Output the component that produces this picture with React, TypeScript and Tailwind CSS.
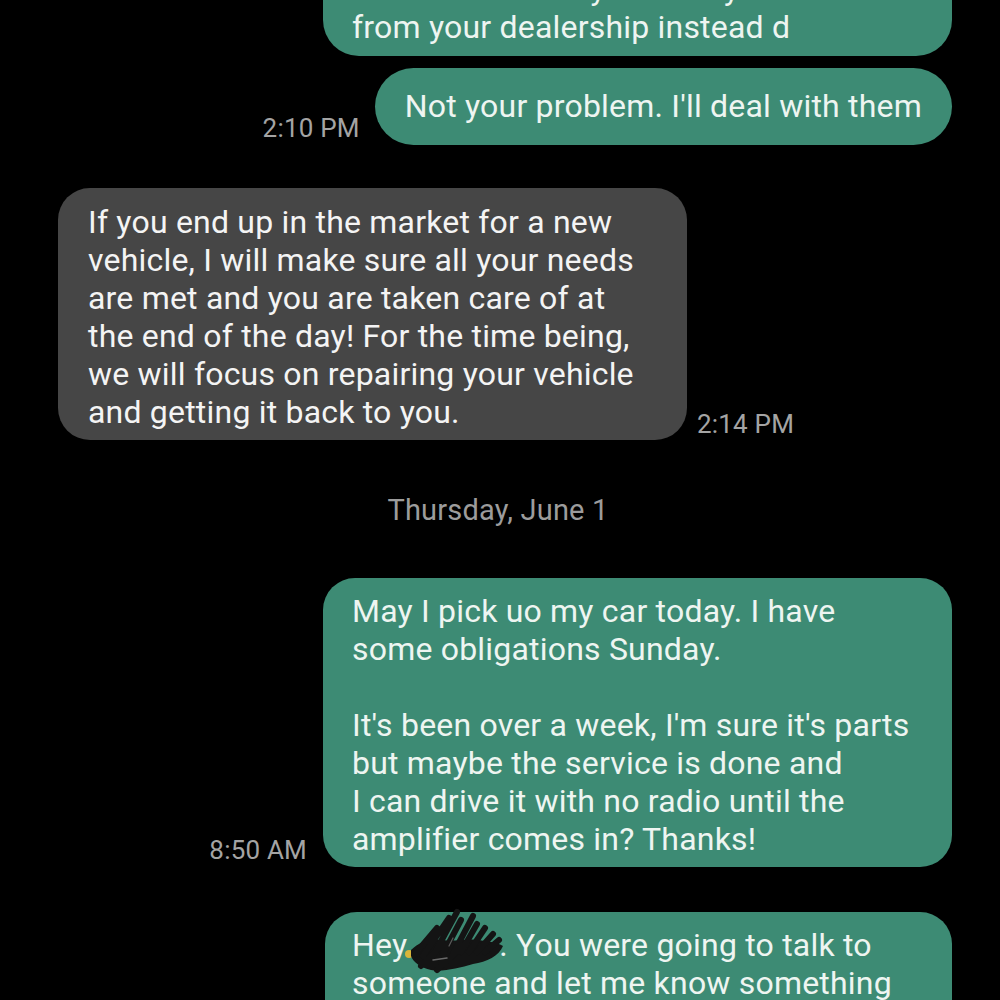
import React from 'react';

const Stamp: React.FC<{ text: string; pb?: string }> = ({ text, pb = 'pb-[2px]' }) => (
  <span className={`shrink-0 whitespace-nowrap text-[26px] leading-[30px] text-[#a4a4a4] ${pb}`}>{text}</span>
);

const Lines: React.FC<{ lines: React.ReactNode[] }> = ({ lines }) => (
  <>
    {lines.map((l, i) => (
      <div key={i} className="h-[38px] whitespace-nowrap">
        {l}
      </div>
    ))}
  </>
);

// redaction scribble over the name
const Scribble: React.FC = () => (
  <span className="relative inline-block h-[38px] w-[92px] align-top">
    <svg
      className="absolute left-[-4px] top-[-20px]"
      width="106"
      height="72"
      viewBox="0 0 106 72"
    >
      <circle cx="6" cy="48" r="4" fill="#d9b53a" />
      <path
        d="M8 44 C16 36 28 32 40 34 C52 36 64 32 76 34 C86 36 94 36 100 40 C96 50 84 56 70 58 C56 62 40 66 28 64 C18 62 10 56 8 50 Z"
        fill="#141414"
      />
      <path
        d="M12 48 L34 22 M20 50 L46 12 M30 50 L54 6 M40 48 L58 14 M50 48 L70 10 M58 46 L74 18 M66 46 L82 22 M74 46 L90 28 M82 46 L96 34 M18 60 L40 38 M34 64 L60 40"
        stroke="#141414"
        strokeWidth="6"
        strokeLinecap="round"
        fill="none"
      />
      <path d="M30 54 L44 52" stroke="#6a6a6a" strokeWidth="1.5" strokeLinecap="round" />
      <path d="M46 40 L50 32" stroke="#5a5a5a" strokeWidth="1.2" strokeLinecap="round" />
    </svg>
  </span>
);

export default function App() {
  return (
    <div className="h-[1000px] w-[1000px] overflow-hidden bg-black font-['Roboto','Noto_Sans',sans-serif] text-[32px] leading-[38px] tracking-[0.2px]">
      <div className="flex flex-col pr-[48px]">
        {/* cut-off first bubble */}
        <div className="mt-[-45px] flex justify-end">
          <div className="w-[629px] rounded-[36px] bg-[#3d8b74] pb-[10px] pl-[29px] pt-[15px] text-[#eef5f1]">
            <Lines lines={["need the car. maybe I'll buy a new car", 'from your dealership instead d']} />
          </div>
        </div>

        <div className="mt-[12px] flex items-end justify-end gap-[15px]">
          <Stamp text="2:10 PM" />
          <div className="rounded-full bg-[#3d8b74] px-[30px] pb-[20px] pt-[19px] text-[#eef5f1]">
            <Lines lines={["Not your problem. I'll deal with them"]} />
          </div>
        </div>

        {/* incoming */}
        <div className="mt-[43px] flex items-end gap-[10px] pl-[58px]">
          <div className="w-[629px] rounded-[32px] bg-[#464646] pb-[9px] pl-[30px] pt-[15px] text-[#f4f4f4]">
            <Lines
              lines={[
                'If you end up in the market for a new',
                'vehicle, I will make sure all your needs',
                'are met and you are taken care of at',
                'the end of the day! For the time being,',
                'we will focus on repairing your vehicle',
                'and getting it back to you.',
              ]}
            />
          </div>
          <Stamp text="2:14 PM" pb="pb-[1px]" />
        </div>

        <div className="mt-[54px] pl-[44px] text-center text-[29px] leading-[32px] text-[#9c9c9c]">
          Thursday, June 1
        </div>

        <div className="mt-[52px] flex items-end justify-end gap-[16px]">
          <Stamp text="8:50 AM" />
          <div className="w-[629px] rounded-[32px] bg-[#3d8b74] pb-[9px] pl-[29px] pt-[14px] text-[#eef5f1]">
            <Lines
              lines={[
                'May I pick uo my car today. I have',
                'some obligations Sunday.',
                '',
                "It's been over a week, I'm sure it's parts",
                'but maybe the service is done and',
                'I can drive it with no radio until the',
                'amplifier comes in? Thanks!',
              ]}
            />
          </div>
        </div>

        <div className="mt-[45px] flex justify-end">
          <div className="w-[627px] rounded-[32px] bg-[#3d8b74] pb-[40px] pl-[27px] pt-[14px] text-[#eef5f1]">
            <Lines
              lines={[
                <>
                  Hey
                  <Scribble />. You were going to talk to
                </>,
                'someone and let me know something',
              ]}
            />
          </div>
        </div>
      </div>
    </div>
  );
}
